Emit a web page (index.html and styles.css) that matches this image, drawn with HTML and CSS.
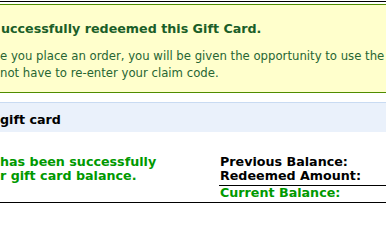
FILE: index.html
```html
<!DOCTYPE html>
<html>
<head>
<meta charset="utf-8">
<link rel="stylesheet" href="styles.css">
</head>
<body>
<div class="page">
  <div class="rule"></div>
  <div class="msg">
    <h4 class="msg-title">uccessfully redeemed this Gift Card.</h4>
    <p class="msg-body">e you place an order, you will be given the opportunity to use the<br>not have to re-enter your claim code.</p>
  </div>
  <div class="section-head">gift card</div>
  <div class="result">
    <div class="result-text">has been successfully<br>r gift card balance.</div>
    <div class="balances">
      <div class="bal-row">Previous Balance:</div>
      <div class="bal-row bal-sub">Redeemed Amount:</div>
      <div class="bal-row bal-current">Current Balance:</div>
    </div>
  </div>
</div>
</body>
</html>
```

FILE: styles.css
```css
html, body {
  margin: 0;
  padding: 0;
  background: #ffffff;
}
body {
  font-family: "DejaVu Sans", Verdana, sans-serif;
  overflow: hidden;
  width: 386px;
  height: 203px;
}
.page {
  padding-top: 1px;
  white-space: nowrap;
}
.rule {
  border-top: 1px solid #000000;
}
.msg {
  margin-top: 2px;
  background: #ffffcc;
  border-top: 1px solid #4f8c00;
  border-bottom: 1px solid #4f8c00;
  padding: 16px 0 11px 1px;
}
.msg-title {
  margin: 0;
  font-size: 12.7px;
  line-height: 16px;
  font-weight: bold;
  color: #1b5e28;
}
.msg-body {
  margin: 11px 0 0 -1px;
  font-size: 11.7px;
  line-height: 16.5px;
  color: #276633;
}
.section-head {
  margin-top: 9px;
  border-top: 1px solid #c9dbf2;
  background: #eaf1fb;
  padding: 9px 0 4px 0;
  font-size: 12.7px;
  line-height: 16px;
  font-weight: bold;
  color: #000000;
}
.result {
  display: flex;
  padding-top: 23px;
  padding-bottom: 2px;
  border-bottom: 1px solid #000000;
}
.result-text {
  width: 219px;
  font-size: 12.7px;
  line-height: 14px;
  font-weight: bold;
  color: #009900;
}
.balances {
  flex: 1;
  font-size: 12.7px;
  line-height: 14px;
  font-weight: bold;
  color: #000000;
}
.bal-row {
  padding-left: 1px;
}
.bal-sub {
  padding-bottom: 2px;
  border-bottom: 1px solid #000000;
}
.bal-current {
  color: #009900;
}
```
